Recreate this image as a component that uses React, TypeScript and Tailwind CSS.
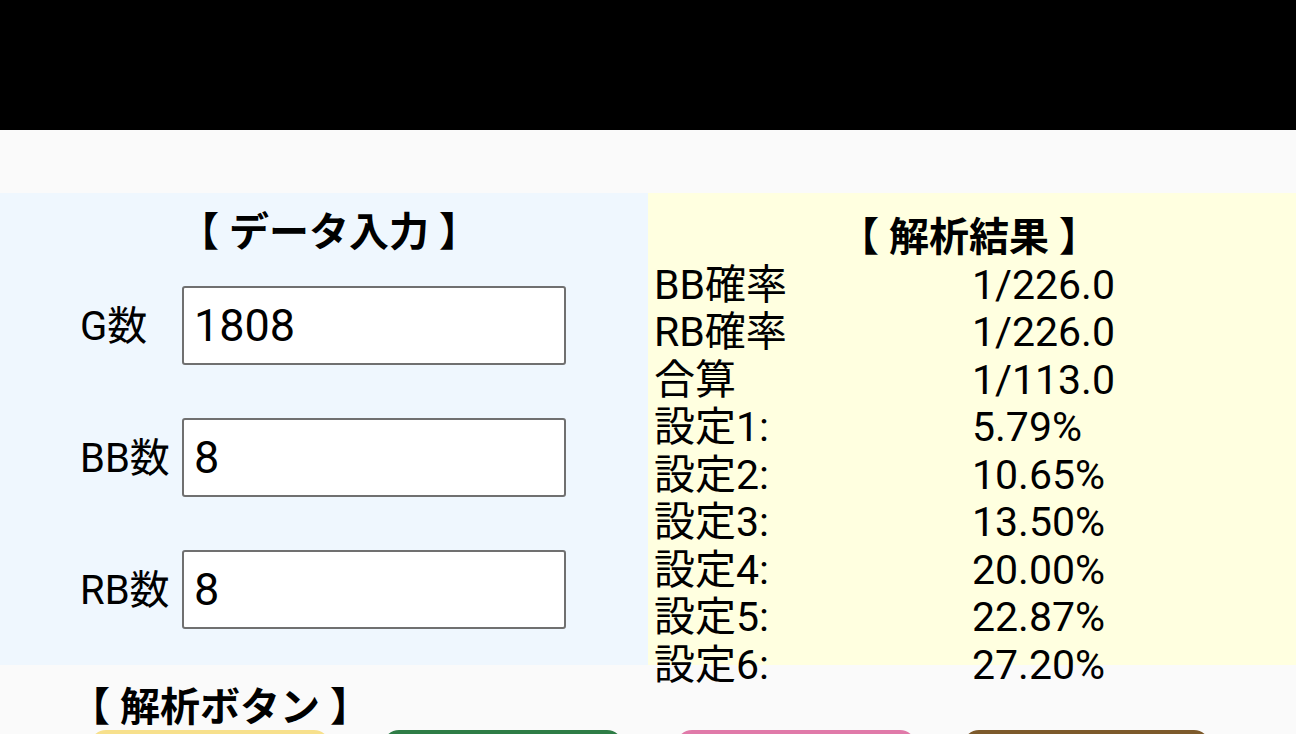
import React from "react";

const font = { fontFamily: 'Roboto, "Noto Sans CJK JP", sans-serif' };

const results: [string, string][] = [
  ["BB確率", "1/226.0"],
  ["RB確率", "1/226.0"],
  ["合算", "1/113.0"],
  ["設定1:", "5.79%"],
  ["設定2:", "10.65%"],
  ["設定3:", "13.50%"],
  ["設定4:", "20.00%"],
  ["設定5:", "22.87%"],
  ["設定6:", "27.20%"],
];

const inputs: [string, string][] = [
  ["G数", "1808"],
  ["BB数", "8"],
  ["RB数", "8"],
];

export default function App() {
  return (
    <div className="w-[1296px] h-[734px] overflow-hidden bg-[#fafafa] text-black" style={font}>
      <div className="h-[130px] bg-black" />
      <div className="h-[63px]" />
      <div className="flex h-[472px]">
        <div className="w-[648px] bg-[#eff7fe] flex flex-col items-center">
          <div className="h-[78px] flex items-center justify-center text-[40px] font-bold pt-[2px] pl-[10px]">【 データ入力 】</div>
          <div className="flex flex-col gap-[53px] pt-[15px] pl-[80px] self-stretch">
            {inputs.map(([label, value]) => (
              <div key={label} className="flex items-center">
                <div className="w-[102px] text-[40px] leading-none pt-[2px]">{label}</div>
                <div className="w-[384px] h-[79px] bg-white border-2 border-[#707070] rounded-[3px] flex items-center pl-[10px] text-[45px] leading-none">
                  {value}
                </div>
              </div>
            ))}
          </div>
        </div>
        <div className="flex-1 bg-[#ffffe0] pt-[21px] pl-[6px] relative">
          <div className="h-[47.5px] flex items-center justify-center text-[40px] font-bold pr-[12px]">【 解析結果 】</div>
          {results.map(([k, v]) => (
            <div key={k} className="flex h-[47.5px] items-center text-[41px] leading-none whitespace-nowrap">
              <div className="w-[318px]">{k}</div>
              <div>{v}</div>
            </div>
          ))}
        </div>
      </div>
      <div className="pl-[70px] pt-[23px] text-[40px] font-bold leading-none h-[65px]">【 解析ボタン 】</div>
      <div className="flex pl-[90px] gap-[53px]">
        <div className="w-[240px] h-[40px] rounded-[16px] bg-[#f7e08c]" />
        <div className="w-[240px] h-[40px] rounded-[16px] bg-[#2e7d46]" />
        <div className="w-[240px] h-[40px] rounded-[16px] bg-[#e07aa9]" />
        <div className="w-[247px] h-[40px] rounded-[16px] bg-[#7d5a2b] ml-[-6px]" />
      </div>
    </div>
  );
}
